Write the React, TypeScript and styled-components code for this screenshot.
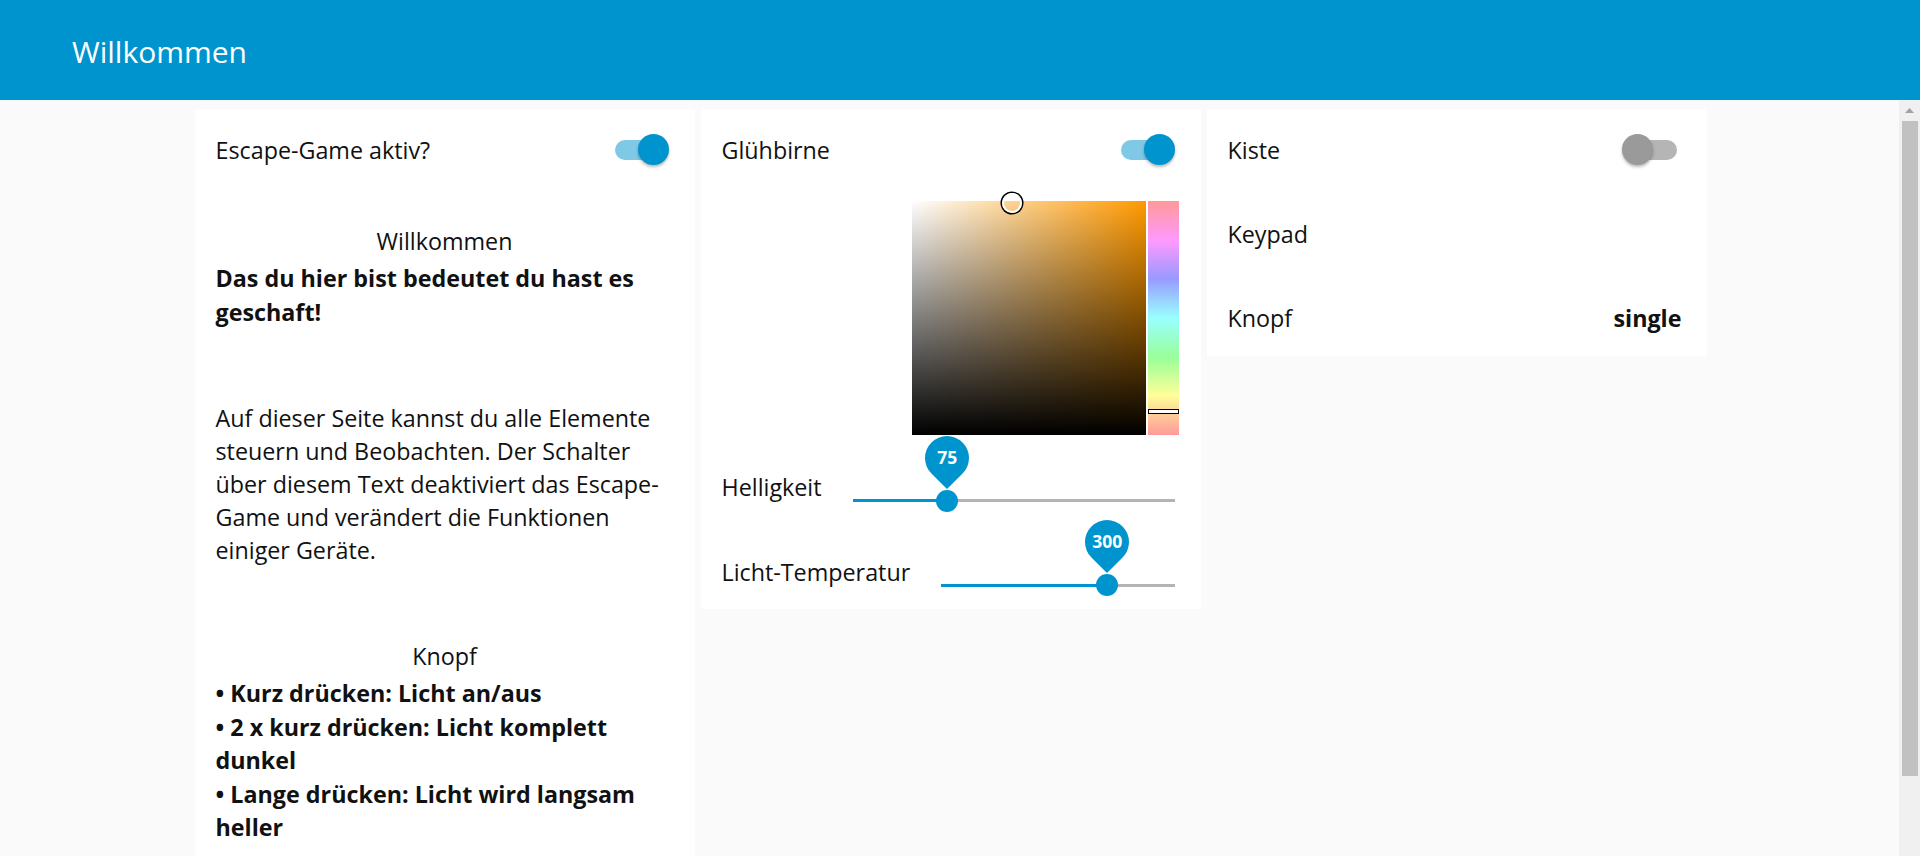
import React from 'react';
import styled, { createGlobalStyle } from 'styled-components';

const GlobalStyle = createGlobalStyle`
  html, body { margin: 0; padding: 0; height: 100%; overflow: hidden; }
  body {
    font-family: "Open Sans", "Noto Sans", sans-serif;
    color: #111;
    background: #fafafa;
  }
  #root { height: 100%; }
`;

const Page = styled.div`
  height: 856px;
  display: flex;
  flex-direction: column;
`;

const Header = styled.header`
  flex: none;
  height: 100px;
  box-sizing: border-box;
  padding: 3px 0 0 72px;
  background: #0094ce;
  display: flex;
  align-items: center;
`;

const Title = styled.h1`
  margin: 0;
  font-size: 30px;
  font-weight: 400;
  line-height: 1;
  color: #fff;
`;

const Body = styled.div`
  flex: 1;
  min-height: 0;
  display: flex;
`;

const Viewport = styled.main`
  flex: 1;
  overflow: hidden;
  display: flex;
  justify-content: center;
  align-items: flex-start;
  gap: 6px;
  padding: 9px 0 0 2px;
  background: #fafafa;
`;

const Scrollbar = styled.div`
  flex: none;
  width: 21px;
  background: #f0f0f0;
  display: flex;
  flex-direction: column;
`;

const ScrollButton = styled.div`
  height: 21px;
  display: flex;
  align-items: center;
  justify-content: center;
`;

const ScrollThumb = styled.div`
  height: 655px;
  margin: 0 2px 0 3px;
  background: #c1c1c1;
`;

const Card = styled.section`
  flex: none;
  width: 500px;
  box-sizing: border-box;
  background: #fff;
  padding: 3px 21px 0;
  display: flex;
  flex-direction: column;
  gap: 9.4px;
`;

const Row = styled.div`
  height: 75px;
  flex: none;
  display: flex;
  align-items: center;
  justify-content: space-between;
  font-size: 23.3px;
`;

const Label = styled.span`
  white-space: nowrap;
`;

const Value = styled.span`
  font-weight: 700;
  margin-right: 4px;
`;

const Switch = styled.div<{ $on: boolean }>`
  position: relative;
  width: 50px;
  height: 20px;
  margin-right: 9px;
  border-radius: 10px;
  background: ${(p) => (p.$on ? 'rgba(0, 148, 206, 0.5)' : '#b5b5b5')};
`;

const Knob = styled.span<{ $on: boolean }>`
  position: absolute;
  top: -5.5px;
  left: ${(p) => (p.$on ? '23.5px' : '-4.5px')};
  width: 31px;
  height: 31px;
  border-radius: 50%;
  background: ${(p) => (p.$on ? '#0094ce' : '#9a9a9a')};
  box-shadow: 0 2px 3px rgba(0, 0, 0, 0.28);
`;

const Template = styled.div`
  padding: 29px 0 78px;
  font-size: 23.3px;
  line-height: 33px;
  white-space: nowrap;
`;

const Heading = styled.div`
  text-align: center;
  margin-bottom: 4px;
`;

const Section = styled.div<{ $spaced?: boolean }>`
  margin-top: ${(p) => (p.$spaced ? '73px' : '0')};
`;

const Bold = styled.div`
  font-weight: 700;
  line-height: 33.5px;
`;

const PickerRow = styled.div`
  height: 244px;
  flex: none;
  display: flex;
  justify-content: flex-end;
  align-items: center;
  gap: 2px;
  padding-right: 1px;
`;

const SatVal = styled.div`
  position: relative;
  width: 234px;
  height: 234px;
  background:
    linear-gradient(to top, #000, rgba(0, 0, 0, 0)),
    linear-gradient(to right, #fff, rgba(255, 255, 255, 0)),
    #ff9a00;
`;

const PickMarker = styled.span`
  position: absolute;
  left: 100px;
  top: 2px;
  width: 16px;
  height: 16px;
  transform: translate(-50%, -50%);
  border: 2px solid #fff;
  border-radius: 50%;
  box-shadow: 0 0 0 1.5px #000;
`;

const HueBar = styled.div`
  position: relative;
  width: 31px;
  height: 234px;
  background: linear-gradient(
    to bottom,
    #ff9999 0%,
    #ff99ff 17%,
    #9999ff 33%,
    #99ffff 50%,
    #99ff99 67%,
    #ffff99 83%,
    #ff9999 100%
  );
`;

const HueMarker = styled.span`
  position: absolute;
  left: 0;
  right: 0;
  top: 208px;
  height: 3px;
  background: #fff;
  border: 1.5px solid #000;
`;

const SliderRow = styled.div`
  height: 75px;
  flex: none;
  display: flex;
  align-items: center;
  font-size: 23.3px;
`;

const SliderTrack = styled.div`
  position: relative;
  flex: 1;
  height: 3px;
  margin: 27px 5px 0 31px;
  background: #b3b3b3;
`;

const SliderFill = styled.div`
  height: 100%;
  background: #0094ce;
`;

const SliderThumb = styled.div`
  position: absolute;
  top: 50%;
  width: 22px;
  height: 22px;
  margin: -11px 0 0 -11px;
  border-radius: 50%;
  background: #0094ce;
`;

const Sign = styled.div`
  position: absolute;
  left: -11px;
  top: -54px;
  width: 44px;
  height: 44px;
  border-radius: 50% 50% 0 50%;
  background: #0094ce;
  transform: rotate(45deg);
  display: flex;
  align-items: center;
  justify-content: center;
`;

const SignText = styled.span`
  transform: rotate(-45deg);
  color: #fff;
  font-weight: 700;
  font-size: 17.5px;
  line-height: 1;
`;

function Toggle({ on }: { on: boolean }) {
  return (
    <Switch $on={on}>
      <Knob $on={on} />
    </Switch>
  );
}

function Slider({ label, value, min, max }: { label: string; value: number; min: number; max: number }) {
  const pct = ((value - min) / (max - min)) * 100;
  return (
    <SliderRow>
      <Label>{label}</Label>
      <SliderTrack>
        <SliderFill style={{ width: `${pct}%` }} />
        <SliderThumb style={{ left: `${pct}%` }}>
          <Sign>
            <SignText>{value}</SignText>
          </Sign>
        </SliderThumb>
      </SliderTrack>
    </SliderRow>
  );
}

export default function App() {
  return (
    <>
      <GlobalStyle />
      <Page>
        <Header>
          <Title>Willkommen</Title>
        </Header>
        <Body>
          <Viewport>
            <Card>
              <Row>
                <Label>Escape-Game aktiv?</Label>
                <Toggle on />
              </Row>
              <Template>
                <Heading>Willkommen</Heading>
                <Bold>
                  Das du hier bist bedeutet du hast es
                  <br />
                  geschaft!
                </Bold>
                <Section $spaced>
                  Auf dieser Seite kannst du alle Elemente
                  <br />
                  steuern und Beobachten. Der Schalter
                  <br />
                  über diesem Text deaktiviert das Escape-
                  <br />
                  Game und verändert die Funktionen
                  <br />
                  einiger Geräte.
                </Section>
                <Section $spaced>
                  <Heading>Knopf</Heading>
                  <Bold>
                    • Kurz drücken: Licht an/aus
                    <br />
                    • 2 x kurz drücken: Licht komplett
                    <br />
                    dunkel
                    <br />
                    • Lange drücken: Licht wird langsam
                    <br />
                    heller
                  </Bold>
                </Section>
              </Template>
            </Card>

            <Card>
              <Row>
                <Label>Glühbirne</Label>
                <Toggle on />
              </Row>
              <PickerRow>
                <SatVal>
                  <PickMarker />
                </SatVal>
                <HueBar>
                  <HueMarker />
                </HueBar>
              </PickerRow>
              <Slider label="Helligkeit" value={75} min={0} max={255} />
              <Slider label="Licht-Temperatur" value={300} min={0} max={421} />
            </Card>

            <Card>
              <Row>
                <Label>Kiste</Label>
                <Toggle on={false} />
              </Row>
              <Row>
                <Label>Keypad</Label>
              </Row>
              <Row>
                <Label>Knopf</Label>
                <Value>single</Value>
              </Row>
            </Card>
          </Viewport>
          <Scrollbar>
            <ScrollButton>
              <svg width="9" height="5" viewBox="0 0 9 5">
                <polygon points="0,5 4.5,0 9,5" fill="#a3a3a3" />
              </svg>
            </ScrollButton>
            <ScrollThumb />
          </Scrollbar>
        </Body>
      </Page>
    </>
  );
}
